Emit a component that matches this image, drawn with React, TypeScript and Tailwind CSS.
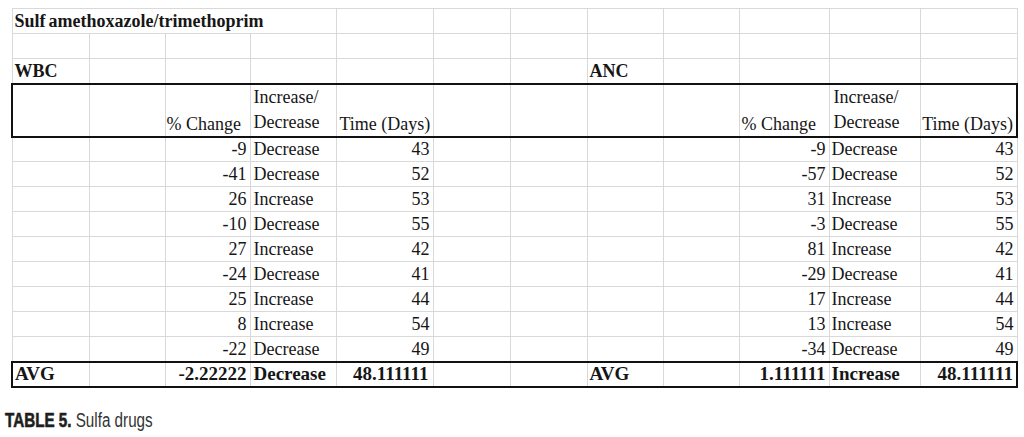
import React from "react";

const wbc = [
  { pct: "-9", dir: "Decrease", days: "43" },
  { pct: "-41", dir: "Decrease", days: "52" },
  { pct: "26", dir: "Increase", days: "53" },
  { pct: "-10", dir: "Decrease", days: "55" },
  { pct: "27", dir: "Increase", days: "42" },
  { pct: "-24", dir: "Decrease", days: "41" },
  { pct: "25", dir: "Increase", days: "44" },
  { pct: "8", dir: "Increase", days: "54" },
  { pct: "-22", dir: "Decrease", days: "49" },
];

const anc = [
  { pct: "-9", dir: "Decrease", days: "43" },
  { pct: "-57", dir: "Decrease", days: "52" },
  { pct: "31", dir: "Increase", days: "53" },
  { pct: "-3", dir: "Decrease", days: "55" },
  { pct: "81", dir: "Increase", days: "42" },
  { pct: "-29", dir: "Decrease", days: "41" },
  { pct: "17", dir: "Increase", days: "44" },
  { pct: "13", dir: "Increase", days: "54" },
  { pct: "-34", dir: "Decrease", days: "49" },
];

const widths = [77, 76, 85, 86, 97, 77, 77, 76, 76, 90, 91, 97];

const cell = "border border-[#d9d9d9] h-[25px] p-0 whitespace-nowrap overflow-visible";
const thickY = "border-t-2 border-b-2 border-t-[#111] border-b-[#111]";

const Blank = () => <td className={cell}></td>;

export default function App() {
  return (
    <div
      className="bg-white w-[1024px] h-[437px] pt-[8px] pl-[11px] text-[#161616]"
      style={{ fontFamily: "'Liberation Serif', 'Times New Roman', serif" }}
    >
      <table className="table-fixed border-collapse text-[18px] leading-[22px]">
        <colgroup>
          {widths.map((w, i) => (
            <col key={i} style={{ width: w }} />
          ))}
        </colgroup>
        <tbody>
          {/* title */}
          <tr>
            <td colSpan={4} className={`${cell} pl-[2px] font-bold`}>
              <span className="mr-[3px]">Sulf</span>amethoxazole/trimethoprim
            </td>
            {Array.from({ length: 8 }).map((_, i) => (
              <Blank key={i} />
            ))}
          </tr>
          <tr>
            {widths.map((_, i) => (
              <Blank key={i} />
            ))}
          </tr>
          <tr>
            <td className={`${cell} pl-[2px] font-bold`}>WBC</td>
            {Array.from({ length: 6 }).map((_, i) => (
              <Blank key={i} />
            ))}
            <td className={`${cell} pl-[2px] font-bold`}>ANC</td>
            {Array.from({ length: 4 }).map((_, i) => (
              <Blank key={"b" + i} />
            ))}
          </tr>

          {/* header */}
          <tr>
            <td className={`${cell} ${thickY} border-l-2 border-l-[#111] h-[52px]`}></td>
            <td className={`${cell} ${thickY}`}></td>
            <td className={`${cell} ${thickY} align-bottom pl-[1px] pb-[1px]`}>% Change</td>
            <td className={`${cell} ${thickY} align-bottom pl-[3px] pb-[1px] leading-[25px]`}>
              Increase/
              <br />
              Decrease
            </td>
            <td className={`${cell} ${thickY} align-bottom pl-[3px] pb-[1px]`}>Time (Days)</td>
            <td className={`${cell} ${thickY}`}></td>
            <td className={`${cell} ${thickY}`}></td>
            <td className={`${cell} ${thickY}`}></td>
            <td className={`${cell} ${thickY}`}></td>
            <td className={`${cell} ${thickY} align-bottom pl-[2px] pb-[1px]`}>% Change</td>
            <td className={`${cell} ${thickY} align-bottom pl-[4px] pb-[1px] leading-[25px]`}>
              Increase/
              <br />
              Decrease
            </td>
            <td className={`${cell} ${thickY} border-r-2 border-r-[#111] align-bottom text-right pr-[3px] pb-[1px]`}>
              Time (Days)
            </td>
          </tr>

          {/* data */}
          {wbc.map((w, i) => {
            const a = anc[i];
            return (
              <tr key={i}>
                <Blank />
                <Blank />
                <td className={`${cell} text-right pr-[3px]`}>{w.pct}</td>
                <td className={`${cell} pl-[3px]`}>{w.dir}</td>
                <td className={`${cell} text-right pr-[3px]`}>{w.days}</td>
                <Blank />
                <Blank />
                <Blank />
                <Blank />
                <td className={`${cell} text-right pr-[3px]`}>{a.pct}</td>
                <td className={`${cell} pl-[2px]`}>{a.dir}</td>
                <td className={`${cell} text-right pr-[3px]`}>{a.days}</td>
              </tr>
            );
          })}

          {/* average */}
          <tr className="font-bold text-[19px]">
            <td className={`${cell} ${thickY} border-l-2 border-l-[#111] pl-[2px]`}>AVG</td>
            <td className={`${cell} ${thickY}`}></td>
            <td className={`${cell} ${thickY} text-right pr-[3px]`}>-2.22222</td>
            <td className={`${cell} ${thickY} pl-[3px]`}>Decrease</td>
            <td className={`${cell} ${thickY} text-right pr-[4px]`}>48.111111</td>
            <td className={`${cell} ${thickY}`}></td>
            <td className={`${cell} ${thickY}`}></td>
            <td className={`${cell} ${thickY} pl-[2px]`}>AVG</td>
            <td className={`${cell} ${thickY}`}></td>
            <td className={`${cell} ${thickY} text-right pr-[3px]`}>1.111111</td>
            <td className={`${cell} ${thickY} pl-[2px]`}>Increase</td>
            <td className={`${cell} ${thickY} border-r-2 border-r-[#111] text-right pr-[3px]`}>48.111111</td>
          </tr>
        </tbody>
      </table>

      <p
        className="mt-[20px] -ml-[6px] text-[19.5px] leading-[24px] text-[#333] inline-block origin-left scale-x-[0.78] whitespace-nowrap"
        style={{ fontFamily: "'Liberation Sans', Arial, sans-serif" }}
      >
        <span className="font-bold text-[#1e1e1e] [-webkit-text-stroke:0.6px_#1e1e1e]">TABLE 5.</span> Sulfa drugs
      </p>
    </div>
  );
}
